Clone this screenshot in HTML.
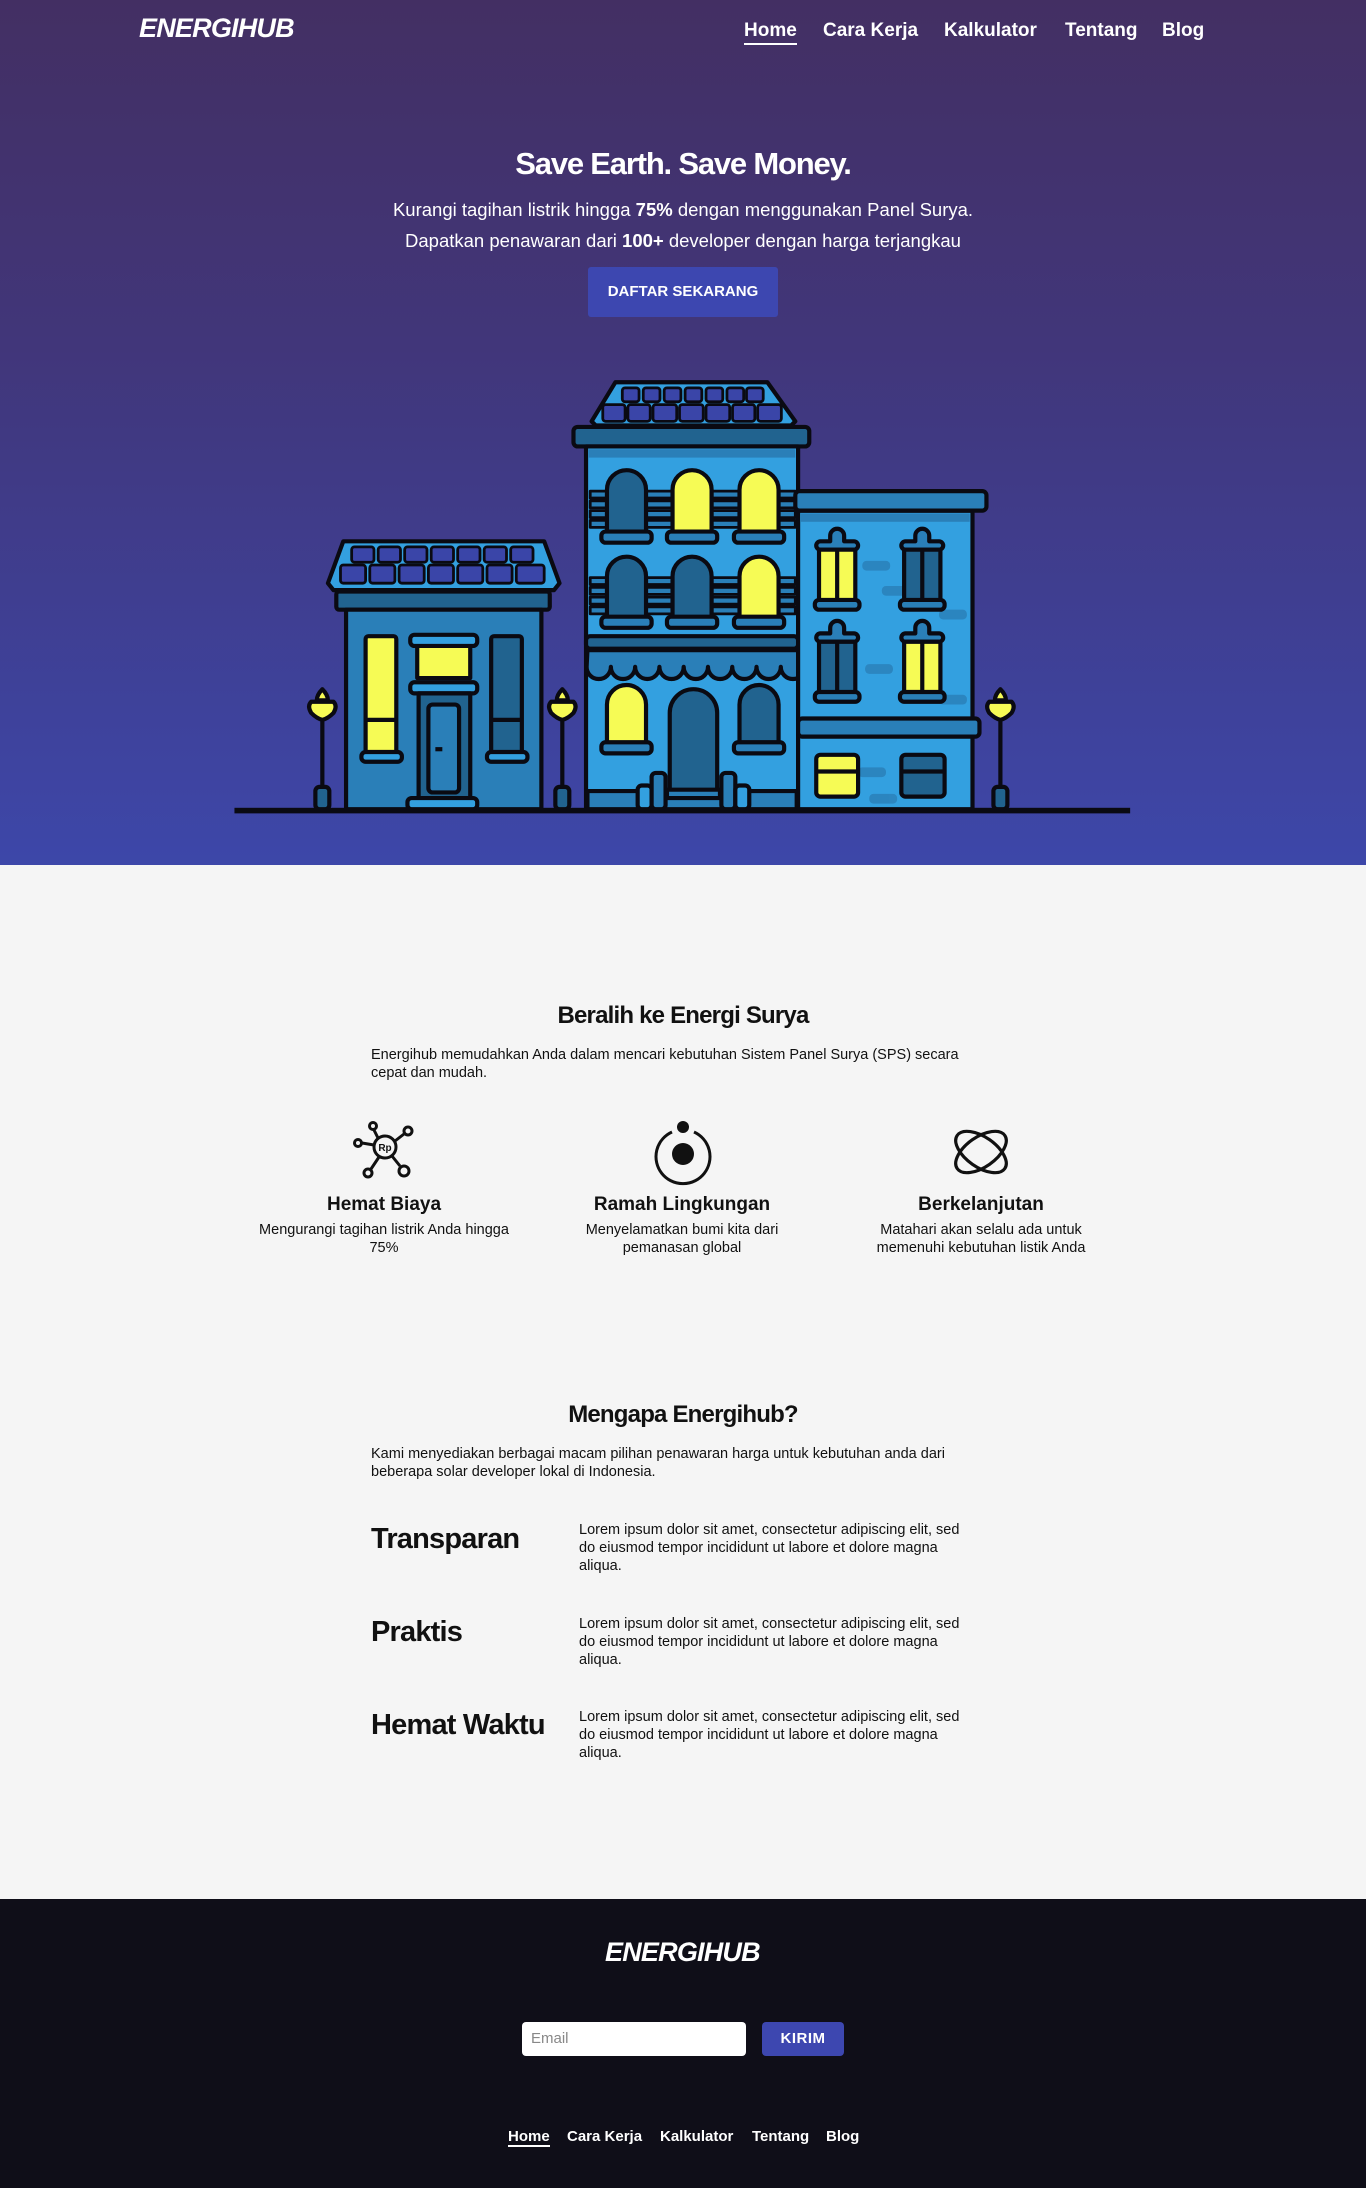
<!DOCTYPE html>
<html><head><meta charset="utf-8">
<style>
*{margin:0;padding:0;box-sizing:border-box}
body{width:1366px;height:2188px;background:#f5f5f5;font-family:"Liberation Sans",sans-serif;color:#111;position:relative;overflow:hidden}
.hero{position:absolute;left:0;top:0;width:1366px;height:865px;background:linear-gradient(#432f63 0%,#41367a 40%,#3d47a9 100%)}
.abs{position:absolute}
.logo{font-style:italic;font-weight:bold;color:#fff;font-size:27px;letter-spacing:-0.8px}
.nav a{position:absolute;color:#fff;text-decoration:none;font-weight:bold;font-size:19px;top:20px}
.c{text-align:center;left:0;width:1366px}
.p15{font-size:14.5px;line-height:18px}
.ft{position:absolute;font-weight:bold;font-size:19px;text-align:center;width:300px}
.fd{position:absolute;font-size:14.5px;line-height:18px;text-align:center;width:290px}
.rt{position:absolute;left:371px;font-weight:bold;font-size:29px;letter-spacing:-0.8px}
.rd{position:absolute;left:579px;width:430px;font-size:14.5px;line-height:18px}
.footer{position:absolute;left:0;top:1899px;width:1366px;height:289px;background:#0f0e18}
.fn a{position:absolute;color:#fff;text-decoration:none;font-weight:bold;font-size:15px;top:2128px}
</style></head><body>
<div class="hero"></div>
<div class="abs logo" style="left:139px;top:13px">ENERGIHUB</div>
<div class="nav">
<a style="left:744px;border-bottom:2px solid #fff;padding-bottom:1px">Home</a>
<a style="left:823px">Cara Kerja</a>
<a style="left:944px">Kalkulator</a>
<a style="left:1065px">Tentang</a>
<a style="left:1162px">Blog</a>
</div>
<div class="abs c" style="top:146px;color:#fff;font-weight:bold;font-size:31px;letter-spacing:-1.2px">Save Earth. Save Money.</div>
<div class="abs c" style="top:194px;color:#fff;font-size:18.5px;line-height:31px">Kurangi tagihan listrik hingga <b>75%</b> dengan menggunakan Panel Surya.<br>Dapatkan penawaran dari <b>100+</b> developer dengan harga terjangkau</div>
<div class="abs" style="left:588px;top:267px;width:190px;height:50px;background:#3d47b0;border-radius:3px;color:#fff;font-weight:bold;font-size:15px;text-align:center;line-height:50px">DAFTAR SEKARANG</div>

<svg class="abs" style="left:0;top:0" width="1366" height="865" viewBox="0 0 979 620">
<g stroke="#0a0a12" stroke-width="3" stroke-linejoin="round">
<polygon points="246,388 390,388 401,418 397,423 239,423 235,418" fill="#33a0e0"/>
<g fill="#3a45a8" stroke-width="2">
<rect x="252" y="392" width="16" height="11" rx="2"/><rect x="271" y="392" width="16" height="11" rx="2"/><rect x="290" y="392" width="16" height="11" rx="2"/><rect x="309" y="392" width="16" height="11" rx="2"/><rect x="328" y="392" width="16" height="11" rx="2"/><rect x="347" y="392" width="16" height="11" rx="2"/><rect x="366" y="392" width="16" height="11" rx="2"/>
<rect x="244" y="405" width="18" height="13" rx="2"/><rect x="265" y="405" width="18" height="13" rx="2"/><rect x="286" y="405" width="18" height="13" rx="2"/><rect x="307" y="405" width="18" height="13" rx="2"/><rect x="328" y="405" width="18" height="13" rx="2"/><rect x="349" y="405" width="18" height="13" rx="2"/><rect x="370" y="405" width="20" height="13" rx="2"/>
</g>
<rect x="241" y="424" width="153" height="13" rx="2" fill="#21638f"/>
<rect x="248" y="437" width="140" height="143" fill="#2a7fb8"/>
<rect x="262" y="456" width="22" height="86" rx="2" fill="#f6fb55"/><line x1="262" y1="516" x2="284" y2="516"/>
<rect x="259" y="539" width="29" height="7" rx="3" fill="#33a0e0"/>
<rect x="352" y="456" width="22" height="86" rx="2" fill="#21638f"/><line x1="352" y1="516" x2="374" y2="516"/>
<rect x="349" y="539" width="29" height="7" rx="3" fill="#33a0e0"/>
<rect x="299" y="462" width="38" height="24" fill="#f6fb55"/>
<rect x="294" y="455" width="48" height="8" rx="3" fill="#33a0e0"/>
<rect x="294" y="489" width="48" height="8" rx="3" fill="#33a0e0"/>
<rect x="300" y="497" width="37" height="79" fill="#21638f"/>
<rect x="307" y="505" width="22" height="63" rx="3" fill="#2a7fb8"/>
<line x1="312" y1="537" x2="317" y2="537"/>
<rect x="292" y="572" width="50" height="8" rx="3" fill="#33a0e0"/>
<polygon points="441,274 550,274 570,302 567,305 427,305 424,302" fill="#33a0e0"/>
<g fill="#3a45a8" stroke-width="2">
<rect x="446" y="278" width="12" height="10" rx="2"/><rect x="461" y="278" width="12" height="10" rx="2"/><rect x="476" y="278" width="12" height="10" rx="2"/><rect x="491" y="278" width="12" height="10" rx="2"/><rect x="506" y="278" width="12" height="10" rx="2"/><rect x="521" y="278" width="12" height="10" rx="2"/><rect x="535" y="278" width="12" height="10" rx="2"/>
<rect x="432" y="290" width="16" height="12" rx="2"/><rect x="450" y="290" width="16" height="12" rx="2"/><rect x="468" y="290" width="17" height="12" rx="2"/><rect x="487" y="290" width="17" height="12" rx="2"/><rect x="506" y="290" width="17" height="12" rx="2"/><rect x="525" y="290" width="16" height="12" rx="2"/><rect x="543" y="290" width="17" height="12" rx="2"/>
</g>
<rect x="411" y="306" width="169" height="14" rx="3" fill="#21638f"/>
<rect x="420" y="320" width="152" height="261" fill="#33a0e0"/>
<rect x="422" y="322" width="148" height="6" fill="#2a7fb8" stroke="none"/>
<g fill="#2a7fb8" stroke-width="2">
<rect x="423" y="352" width="147" height="5"/><rect x="423" y="359" width="147" height="5"/><rect x="423" y="366" width="147" height="5"/><rect x="423" y="373" width="147" height="5"/>
<rect x="423" y="414" width="147" height="5"/><rect x="423" y="421" width="147" height="5"/><rect x="423" y="428" width="147" height="5"/><rect x="423" y="435" width="147" height="5"/>
</g>
<path d="M435,382 V351 a14,14 0 0 1 28,0 V382 Z" fill="#21638f"/>
<path d="M482,382 V351 a14,14 0 0 1 28,0 V382 Z" fill="#f6fb55"/>
<path d="M530,382 V351 a14,14 0 0 1 28,0 V382 Z" fill="#f6fb55"/>
<rect x="431" y="381" width="36" height="8" rx="3" fill="#2a7fb8"/><rect x="478" y="381" width="36" height="8" rx="3" fill="#2a7fb8"/><rect x="526" y="381" width="36" height="8" rx="3" fill="#2a7fb8"/>
<path d="M435,443 V413 a14,14 0 0 1 28,0 V443 Z" fill="#21638f"/>
<path d="M482,443 V413 a14,14 0 0 1 28,0 V443 Z" fill="#21638f"/>
<path d="M530,443 V413 a14,14 0 0 1 28,0 V443 Z" fill="#f6fb55"/>
<rect x="431" y="442" width="36" height="8" rx="3" fill="#2a7fb8"/><rect x="478" y="442" width="36" height="8" rx="3" fill="#2a7fb8"/><rect x="526" y="442" width="36" height="8" rx="3" fill="#2a7fb8"/>
<rect x="420" y="456" width="152" height="9" rx="3" fill="#21638f"/>
<path d="M421,466 H573 L577,478 a8.7,8.7 0 0 1 -17.4,0 a8.7,8.7 0 0 1 -17.4,0 a8.7,8.7 0 0 1 -17.4,0 a8.7,8.7 0 0 1 -17.4,0 a8.7,8.7 0 0 1 -17.4,0 a8.7,8.7 0 0 1 -17.4,0 a8.7,8.7 0 0 1 -17.4,0 a8.7,8.7 0 0 1 -17.4,0 a8.7,8.7 0 0 1 -17.4,0 Z" fill="#2a7fb8"/>
<path d="M435,533 V505 a14,14 0 0 1 28,0 V533 Z" fill="#f6fb55"/>
<path d="M530,533 V505 a14,14 0 0 1 28,0 V533 Z" fill="#21638f"/>
<rect x="431" y="532" width="36" height="8" rx="3" fill="#2a7fb8"/><rect x="526" y="532" width="36" height="8" rx="3" fill="#2a7fb8"/>
<path d="M480,570 V511 a17,17 0 0 1 34,0 V570 Z" fill="#21638f"/>
<rect x="421" y="567" width="150" height="13" fill="#2a7fb8"/>
<rect x="478" y="566" width="38" height="6" fill="#2a7fb8"/>
<rect x="457" y="563" width="10" height="17" rx="3" fill="#33a0e0"/><rect x="467" y="554" width="10" height="26" rx="3" fill="#2a7fb8"/>
<rect x="517" y="554" width="10" height="26" rx="3" fill="#2a7fb8"/><rect x="527" y="563" width="10" height="17" rx="3" fill="#33a0e0"/>
<rect x="572" y="366" width="125" height="214" fill="#33a0e0"/>
<rect x="574" y="368" width="121" height="6" fill="#2a7fb8" stroke="none"/>
<g fill="#2a7fb8" stroke="none" opacity="0.8">
<rect x="618" y="402" width="20" height="7" rx="3"/><rect x="632" y="420" width="20" height="7" rx="3"/><rect x="673" y="437" width="20" height="7" rx="3"/><rect x="620" y="476" width="20" height="7" rx="3"/><rect x="673" y="498" width="20" height="7" rx="3"/><rect x="615" y="550" width="20" height="7" rx="3"/><rect x="623" y="569" width="20" height="7" rx="3"/>
</g>
<rect x="570" y="352" width="137" height="14" rx="3" fill="#2a7fb8"/>
<path d="M595,388 V384 a5,5 0 0 1 10,0 V388 H612 a3,3 0 0 1 0,6 H588 a3,3 0 0 1 0,-6 Z" fill="#2a7fb8"/>
<rect x="587" y="394" width="26" height="38" fill="#f6fb55"/><line x1="600" y1="394" x2="600" y2="432"/>
<rect x="584" y="430" width="32" height="7" rx="3" fill="#2a7fb8"/>
<path d="M656,388 V384 a5,5 0 0 1 10,0 V388 H673 a3,3 0 0 1 0,6 H649 a3,3 0 0 1 0,-6 Z" fill="#2a7fb8"/>
<rect x="648" y="394" width="26" height="38" fill="#21638f"/><line x1="661" y1="394" x2="661" y2="432"/>
<rect x="645" y="430" width="32" height="7" rx="3" fill="#2a7fb8"/>
<path d="M595,454 V450 a5,5 0 0 1 10,0 V454 H612 a3,3 0 0 1 0,6 H588 a3,3 0 0 1 0,-6 Z" fill="#2a7fb8"/>
<rect x="587" y="460" width="26" height="38" fill="#21638f"/><line x1="600" y1="460" x2="600" y2="498"/>
<rect x="584" y="496" width="32" height="7" rx="3" fill="#2a7fb8"/>
<path d="M656,454 V450 a5,5 0 0 1 10,0 V454 H673 a3,3 0 0 1 0,6 H649 a3,3 0 0 1 0,-6 Z" fill="#2a7fb8"/>
<rect x="648" y="460" width="26" height="38" fill="#f6fb55"/><line x1="661" y1="460" x2="661" y2="498"/>
<rect x="645" y="496" width="32" height="7" rx="3" fill="#2a7fb8"/>
<rect x="572" y="515" width="130" height="13" rx="3" fill="#2a7fb8"/>
<rect x="585" y="541" width="30" height="30" rx="3" fill="#f6fb55"/><line x1="585" y1="553" x2="615" y2="553"/>
<rect x="646" y="541" width="31" height="30" rx="3" fill="#21638f"/><line x1="646" y1="553" x2="677" y2="553"/>
<g fill="#f6fb55">
<path d="M231,494 q4,4 4,8 h-8 q0,-4 4,-8z"/><path d="M223,503 h16 q3,3 0,8 q-4,4 -8,5 q-4,-1 -8,-5 q-3,-5 0,-8z"/>
<path d="M403,494 q4,4 4,8 h-8 q0,-4 4,-8z"/><path d="M395,503 h16 q3,3 0,8 q-4,4 -8,5 q-4,-1 -8,-5 q-3,-5 0,-8z"/>
<path d="M717,494 q4,4 4,8 h-8 q0,-4 4,-8z"/><path d="M709,503 h16 q3,3 0,8 q-4,4 -8,5 q-4,-1 -8,-5 q-3,-5 0,-8z"/>
</g>
<g fill="#21638f">
<rect x="226" y="564" width="10" height="16" rx="3"/><rect x="398" y="564" width="10" height="16" rx="3"/><rect x="712" y="564" width="10" height="16" rx="3"/>
</g>
<line x1="231" y1="517" x2="231" y2="564"/><line x1="403" y1="517" x2="403" y2="564"/><line x1="717" y1="517" x2="717" y2="564"/>
</g>
<rect x="168" y="579" width="642" height="4" fill="#0a0a12"/>
</svg>

<div class="abs c" style="top:1002px;font-weight:bold;font-size:24px;letter-spacing:-0.8px">Beralih ke Energi Surya</div>
<div class="abs p15" style="left:371px;top:1046px;width:620px">Energihub memudahkan Anda dalam mencari kebutuhan Sistem Panel Surya (SPS) secara<br>cepat dan mudah.</div>

<svg class="abs" style="left:340px;top:1110px" width="90" height="80" viewBox="0 0 90 80" fill="none" stroke="#111" stroke-width="3">
<circle cx="45" cy="37" r="11"/>
<line x1="38" y1="28" x2="34" y2="20"/><circle cx="33" cy="16" r="3.5"/>
<line x1="55" y1="31" x2="64" y2="24"/><circle cx="68" cy="21" r="4"/>
<line x1="34" y1="35" x2="22" y2="33"/><circle cx="18" cy="33" r="3.5"/>
<line x1="39" y1="47" x2="31" y2="59"/><circle cx="28" cy="63" r="4"/>
<line x1="52" y1="46" x2="60" y2="56"/><circle cx="64" cy="61" r="5"/>
<text x="45" y="41" font-family="Liberation Sans" font-size="10" font-weight="bold" fill="#111" stroke="none" text-anchor="middle">Rp</text>
</svg>
<svg class="abs" style="left:640px;top:1110px" width="90" height="80" viewBox="0 0 90 80">
<path d="M32,22 A27,27 0 1 0 54,22" fill="none" stroke="#111" stroke-width="3"/>
<circle cx="43" cy="17" r="6" fill="#111"/>
<circle cx="43" cy="44" r="11" fill="#111"/>
</svg>
<svg class="abs" style="left:945px;top:1118px" width="72" height="72" viewBox="0 0 72 72" fill="none" stroke="#111" stroke-width="3.2">
<ellipse cx="36" cy="34" rx="29" ry="15" transform="rotate(35 36 34)"/>
<ellipse cx="36" cy="34" rx="29" ry="15" transform="rotate(-35 36 34)"/>
</svg>

<div class="ft" style="left:234px;top:1194px">Hemat Biaya</div>
<div class="fd" style="left:239px;top:1221px">Mengurangi tagihan listrik Anda hingga<br>75%</div>
<div class="ft" style="left:532px;top:1194px">Ramah Lingkungan</div>
<div class="fd" style="left:537px;top:1221px">Menyelamatkan bumi kita dari<br>pemanasan global</div>
<div class="ft" style="left:831px;top:1194px">Berkelanjutan</div>
<div class="fd" style="left:836px;top:1221px">Matahari akan selalu ada untuk<br>memenuhi kebutuhan listik Anda</div>

<div class="abs c" style="top:1401px;font-weight:bold;font-size:24px;letter-spacing:-0.8px">Mengapa Energihub?</div>
<div class="abs p15" style="left:371px;top:1445px;width:620px">Kami menyediakan berbagai macam pilihan penawaran harga untuk kebutuhan anda dari<br>beberapa solar developer lokal di Indonesia.</div>

<div class="rt" style="top:1523px">Transparan</div>
<div class="rd" style="top:1521px">Lorem ipsum dolor sit amet, consectetur adipiscing elit, sed<br>do eiusmod tempor incididunt ut labore et dolore magna<br>aliqua.</div>
<div class="rt" style="top:1616px">Praktis</div>
<div class="rd" style="top:1615px">Lorem ipsum dolor sit amet, consectetur adipiscing elit, sed<br>do eiusmod tempor incididunt ut labore et dolore magna<br>aliqua.</div>
<div class="rt" style="top:1709px">Hemat Waktu</div>
<div class="rd" style="top:1708px">Lorem ipsum dolor sit amet, consectetur adipiscing elit, sed<br>do eiusmod tempor incididunt ut labore et dolore magna<br>aliqua.</div>

<div class="footer"></div>
<div class="abs logo" style="left:605px;top:1937px">ENERGIHUB</div>
<div class="abs" style="left:522px;top:2022px;width:224px;height:34px;background:#fff;border-radius:4px;color:#888;font-size:15px;line-height:34px;padding-left:9px">Email</div>
<div class="abs" style="left:762px;top:2022px;width:82px;height:34px;background:#3d47b0;border-radius:4px;color:#fff;font-weight:bold;font-size:15px;line-height:34px;text-align:center;letter-spacing:0.5px">KIRIM</div>
<div class="fn">
<a style="left:508px;border-bottom:2px solid #fff">Home</a>
<a style="left:567px">Cara Kerja</a>
<a style="left:660px">Kalkulator</a>
<a style="left:752px">Tentang</a>
<a style="left:826px">Blog</a>
</div>
</body></html>
